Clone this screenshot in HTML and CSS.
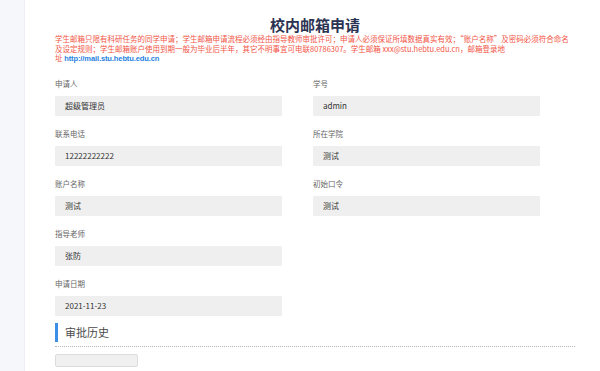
FILE: index.html
```html
<!DOCTYPE html>
<html lang="zh-CN">
<head>
<meta charset="utf-8">
<title>校内邮箱申请</title>
<link rel="stylesheet" href="styles.css">
</head>
<body>
<div class="layout">
  <aside class="sidebar"></aside>
  <main class="main">
    <h1 class="title">校内邮箱申请</h1>
    <p class="notice">学生邮箱只限有科研任务的同学申请；学生邮箱申请流程必须经由指导教师审批许可；申请人必须保证所填数据真实有效；“账户名称”及密码必须符合命名<br>及设定规则；学生邮箱账户使用到期一般为毕业后半年，其它不明事宜可电联80786307。学生邮箱 xxx@stu.hebtu.edu.cn，邮箱登录地<br>址 <a class="link" href="#">http://mail.stu.hebtu.edu.cn</a></p>
    <div class="form">
      <div class="field"><div class="label">申请人</div><div class="value">超级管理员</div></div>
      <div class="field"><div class="label">学号</div><div class="value">admin</div></div>
      <div class="field"><div class="label">联系电话</div><div class="value">12222222222</div></div>
      <div class="field"><div class="label">所在学院</div><div class="value">测试</div></div>
      <div class="field"><div class="label">账户名称</div><div class="value">测试</div></div>
      <div class="field"><div class="label">初始口令</div><div class="value">测试</div></div>
      <div class="field"><div class="label">指导老师</div><div class="value">张防</div></div>
      <div class="field empty"></div>
      <div class="field"><div class="label">申请日期</div><div class="value">2021-11-23</div></div>
    </div>
    <h2 class="section-title"><span class="section-bar">审批历史</span></h2>
    <div class="divider"></div>
    <div class="history-box"></div>
  </main>
</div>
</body>
</html>
```
FILE: styles.css
```css
* { box-sizing: border-box; }
html, body { margin: 0; padding: 0; background: #fff; }
body {
  font-family: "Noto Sans CJK SC", "Noto Sans", sans-serif;
  width: 600px;
  height: 371px;
  overflow: hidden;
}
.layout { display: flex; height: 371px; }
.sidebar {
  width: 25px;
  flex: none;
  background: #f5f7fa;
  border-right: 1px solid #edf0f4;
}
.main {
  flex: 1;
  padding: 0 25px 0 30px;
}
.title {
  margin: 16px 0 0;
  text-align: center;
  font-size: 15px;
  line-height: 18px;
  font-weight: bold;
  color: #2c3352;
}
.notice {
  margin: 0;
  font-size: 7.5px;
  line-height: 9.5px;
  color: #f25546;
  white-space: nowrap;
}
.link {
  color: #1f7fe0;
  text-decoration: none;
  font-family: "Liberation Sans", Arial, sans-serif;
  font-weight: 600;
  letter-spacing: -0.1px;
}
.form {
  display: grid;
  grid-template-columns: 258px 258px;
  margin-top: 15px;
}
.field { margin-bottom: 13px; }
.label {
  font-size: 7.5px;
  line-height: 10px;
  color: #666;
  margin-bottom: 7px;
}
.value {
  width: 227px;
  height: 20px;
  background: #efefef;
  border-radius: 1px;
  padding-left: 10px;
  font-size: 8px;
  line-height: 20px;
  color: #333;
}
.form .field:last-child { margin-bottom: 0; }
.section-title {
  margin: 7px 0 0;
  font-size: 11px;
  font-weight: normal;
  line-height: 19px;
  color: #4a4a4a;
}
.section-bar {
  display: block;
  border-left: 3px solid #3d8ee6;
  padding-left: 7px;
}
.divider {
  margin-top: 4px;
  border-top: 1px dotted #b5b5b5;
}
.history-box {
  margin-top: 7px;
  width: 83px;
  height: 13px;
  background: #f0f0f0;
  border: 1px solid #dcdcdc;
  border-radius: 2px;
}
```
